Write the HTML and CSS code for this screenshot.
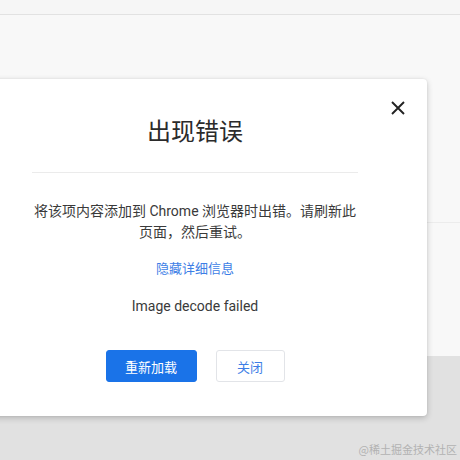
FILE: index.html
```html
<!DOCTYPE html>
<html lang="zh-CN">
<head>
<meta charset="utf-8">
<title>出现错误</title>
<link rel="stylesheet" href="styles.css">
</head>
<body>
<div class="page">
  <header class="topbar"></header>
  <section class="band band-a"></section>
  <section class="band band-b"></section>
  <footer class="footer">
    <span class="watermark">@稀土掘金技术社区</span>
  </footer>
</div>

<div class="dialog" role="dialog">
  <button class="close" aria-label="关闭">
    <svg width="16" height="16" viewBox="0 0 16 16"><path d="M2 2 L14 14 M14 2 L2 14" stroke="#222" stroke-width="1.9" fill="none"/></svg>
  </button>
  <div class="content">
    <h1 class="title">出现错误</h1>
    <hr class="divider">
    <p class="message">将该项内容添加到 Chrome 浏览器时出错。请刷新此页面，然后重试。</p>
    <a class="details" href="#">隐藏详细信息</a>
    <p class="error">Image decode failed</p>
    <div class="actions">
      <button class="btn btn-primary">重新加载</button>
      <button class="btn btn-secondary">关闭</button>
    </div>
  </div>
</div>
</body>
</html>
```
FILE: styles.css
```css
* { box-sizing: border-box; }
html, body { margin: 0; padding: 0; }
body {
  width: 460px;
  height: 460px;
  overflow: hidden;
  font-family: Roboto, "Noto Sans CJK SC", sans-serif;
  background: #e1e1e1;
  position: relative;
}
.page {
  display: flex;
  flex-direction: column;
  height: 460px;
}
.topbar {
  height: 15px;
  background: #f6f6f6;
  border-bottom: 1px solid #e2e2e2;
  box-shadow: 0 1px 3px rgba(0,0,0,0.06);
}
.band {
  background: #f8f8f8;
}
.band-a {
  height: 208px;
  border-bottom: 1px solid #ececec;
}
.band-b {
  height: 133px;
}
.footer {
  flex: 1;
  background: #e1e1e1;
  display: flex;
  justify-content: flex-end;
  align-items: flex-end;
  padding: 0 3px 3px 0;
}
.watermark {
  font-family: "Noto Sans CJK SC", sans-serif;
  font-size: 11px;
  color: #b2b2b2;
  line-height: 16px;
}

.dialog {
  position: absolute;
  left: -37px;
  top: 79px;
  width: 464px;
  height: 337px;
  background: #fff;
  border-radius: 4px;
  box-shadow: 0 2px 6px rgba(0,0,0,0.2), 0 0 2px rgba(0,0,0,0.08);
}
.close {
  position: absolute;
  top: 21px;
  right: 21px;
  width: 16px;
  height: 16px;
  padding: 0;
  border: 0;
  background: none;
  display: flex;
}
.content {
  width: 326px;
  margin: 0 auto;
  padding-top: 35px;
  display: flex;
  flex-direction: column;
  align-items: center;
  text-align: center;
}
.title {
  margin: 0;
  font-family: "Noto Sans CJK SC", sans-serif;
  font-weight: 400;
  font-size: 24px;
  line-height: 32px;
  color: #2b2b2b;
}
.divider {
  width: 100%;
  margin: 26px 0 0;
  border: 0;
  border-top: 1.5px solid #ebebeb;
}
.message {
  margin: 28px 0 0;
  font-size: 14px;
  line-height: 21px;
  color: #3a3a3a;
}
.details {
  margin-top: 15px;
  font-family: "Noto Sans CJK SC", sans-serif;
  font-size: 13px;
  line-height: 20px;
  color: #3d7ee6;
  text-decoration: none;
}
.error {
  margin: 18px 0 0;
  font-size: 14px;
  line-height: 20px;
  color: #3a3a3a;
}
.actions {
  margin-top: 34px;
  display: flex;
  gap: 19px;
}
.btn {
  height: 32px;
  border-radius: 3px;
  font-family: "Noto Sans CJK SC", sans-serif;
  font-size: 13px;
  padding: 0;
}
.btn-primary {
  width: 91px;
  background: #1a73e8;
  border: 1px solid #1a73e8;
  color: #fff;
}
.btn-secondary {
  width: 69px;
  background: #fff;
  border: 1px solid #e2e4e8;
  color: #3d7ee6;
}
```
